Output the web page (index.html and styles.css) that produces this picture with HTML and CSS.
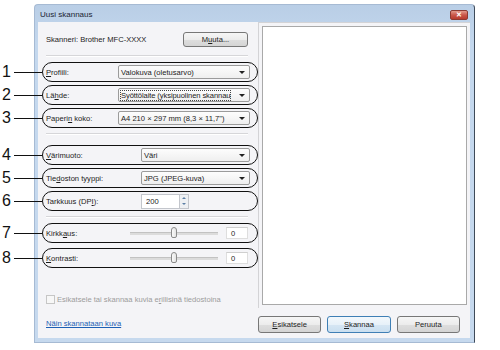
FILE: index.html
```html
<!DOCTYPE html>
<html lang="fi">
<head>
  <meta charset="UTF-8" />
  <meta name="viewport" content="width=device-width, initial-scale=1.0"/>
  <title>Uusi skannaus</title>
  <link rel="stylesheet" href="styles.css">
</head>
<body>
  <div class="page">
    <div class="window">
      <!-- Title bar -->
      <div class="titlebar">
        <span class="title">Uusi skannaus</span>
        <span class="close-btn">✕</span>
      </div>

      <div class="client">
        <!-- Settings column -->
        <div class="settings">
          <div class="scanner-row">
            <span>Skanneri: Brother MFC-XXXX</span>
            <span class="btn btn-change">M<u>u</u>uta...</span>
          </div>
          <div class="sep"></div>

          <div class="field callout">
            <span class="num">1</span>
            <span class="label label-a"><u>P</u>rofiili:</span>
            <div class="combo"><span class="combo-text">Valokuva (oletusarvo)</span></div>
          </div>
          <div class="field callout">
            <span class="num">2</span>
            <span class="label label-a">Lä<u>h</u>de:</span>
            <div class="combo"><span class="combo-text focused">Syöttölaite (yksipuolinen skannau</span></div>
          </div>
          <div class="field callout">
            <span class="num">3</span>
            <span class="label label-a">Paperi<u>n</u> koko:</span>
            <div class="combo"><span class="combo-text">A4 210 × 297 mm (8,3 × 11,7")</span></div>
          </div>
          <div class="sep"></div>

          <div class="field callout first-in-group">
            <span class="num">4</span>
            <span class="label label-b"><u>V</u>ärimuoto:</span>
            <div class="combo"><span class="combo-text">Väri</span></div>
          </div>
          <div class="field callout">
            <span class="num">5</span>
            <span class="label label-b">Tie<u>d</u>oston tyyppi:</span>
            <div class="combo"><span class="combo-text">JPG (JPEG-kuva)</span></div>
          </div>
          <div class="field callout">
            <span class="num">6</span>
            <span class="label label-b">Tarkkuus (DP<u>I</u>):</span>
            <div class="spinner">
              <span class="spin-value">200</span>
              <span class="spin-buttons">
                <span class="spin-up"></span>
                <span class="spin-down"></span>
              </span>
            </div>
          </div>
          <div class="sep"></div>

          <div class="field callout">
            <span class="num">7</span>
            <span class="label label-c">Kirkk<u>a</u>us:</span>
            <div class="slider"><span class="thumb"></span></div>
            <span class="value-box">0</span>
          </div>
          <div class="field callout slider-second">
            <span class="num">8</span>
            <span class="label label-c"><u>K</u>ontrasti:</span>
            <div class="slider"><span class="thumb"></span></div>
            <span class="value-box">0</span>
          </div>

          <div class="check-row">
            <span class="checkbox"></span>
            <span>Esikatsele tai skannaa kuvia e<u>r</u>illisinä tiedostoina</span>
          </div>
          <a class="help-link" href="#">Näin skannataan kuva</a>
        </div>

        <!-- Preview column -->
        <div class="preview-col">
          <div class="preview-frame">
            <div class="preview"></div>
          </div>
          <div class="actions">
            <span class="btn"><u>E</u>sikatsele</span>
            <span class="btn btn-default"><u>S</u>kannaa</span>
            <span class="btn">Peruuta</span>
          </div>
        </div>
      </div>
    </div>
  </div>
</body>
</html>
```

FILE: styles.css
```css
body {
  margin: 0;
  background: #fff;
  font-family: "Liberation Sans", Arial, sans-serif;
  font-size: 7.6px;
  color: #1c1c1c;
}
.page {
  padding: 4px 0 0 34px;
}
.window {
  width: 441px;
  height: 339px;
  box-sizing: border-box;
  background: linear-gradient(#b9cee6, #c4d8ee 40px, #c6d9ee);
  border: 1px solid #a6bad3;
  border-right-color: #3e4a59;
  border-radius: 4px 4px 0 0;
  padding: 0 4px 4px 3px;
  display: flex;
  flex-direction: column;
}
.titlebar {
  height: 17px;
  display: flex;
  align-items: center;
  justify-content: space-between;
  padding: 2px 2px 0 2px;
  box-sizing: border-box;
}
.title {
  color: #1a2433;
  font-size: 8px;
}
.close-btn {
  width: 18px;
  height: 10px;
  box-sizing: border-box;
  border: 1px solid #8c3a32;
  border-radius: 2px;
  background: linear-gradient(#e49a8c, #c9574a 50%, #b93a2d);
  color: #fff;
  font-size: 7px;
  line-height: 8px;
  text-align: center;
  font-weight: bold;
}

/* client area */
.client {
  flex: 1;
  display: flex;
  background: #f4f4f7;
}
.settings {
  width: 220px;
  box-sizing: border-box;
  padding: 10px 8px 0 8px;
  display: flex;
  flex-direction: column;
}
.scanner-row {
  height: 15px;
  display: flex;
  align-items: center;
  justify-content: space-between;
}
.btn {
  width: 65px;
  height: 17px;
  box-sizing: border-box;
  border: 1px solid #777;
  border-radius: 3px;
  background: linear-gradient(#f6f6f6, #ececec 50%, #dedede 51%, #d4d4d4);
  display: inline-flex;
  align-items: center;
  justify-content: center;
  color: #1c1c1c;
}
.btn-change {
  height: 15px;
  margin-right: 2px;
}
.btn-default {
  border-color: #3f7fb5;
  background: linear-gradient(#f3f8fc, #e7f1f9 50%, #d6e6f3 51%, #cadff0);
}
.sep {
  height: 1px;
  background: #d6d6d9;
  box-shadow: 0 1px 0 #fff;
  margin-top: 8px;
  margin-right: 2px;
}

/* form rows */
.field {
  position: relative;
  height: 14px;
  margin-top: 9px;
  display: flex;
  align-items: center;
}
.first-in-group {
  margin-top: 14px;
}
.slider-second {
  margin-top: 11px;
}
.label {
  flex: none;
}
.label-a { width: 72px; }
.label-b { width: 95px; }
.label-c { width: 84px; }

/* callouts drawn over the screenshot */
.callout::before {
  content: '';
  position: absolute;
  left: -4px;
  right: -8px;
  top: -3px;
  bottom: -3px;
  border: 1.5px solid #111;
  border-radius: 11px;
}
.num {
  position: absolute;
  left: -44px;
  top: -1px;
  font-size: 16px;
  line-height: 16px;
  color: #111;
}
.num::after {
  content: '';
  position: absolute;
  left: 12px;
  top: 8px;
  width: 28px;
  height: 1px;
  background: #111;
}

.combo {
  flex: 1;
  height: 14px;
  box-sizing: border-box;
  border: 1px solid #9b9b9b;
  border-radius: 2px;
  background: linear-gradient(#fdfdfd, #efefef);
  display: flex;
  align-items: center;
  padding: 0 4px 0 1px;
  min-width: 0;
}
.combo::after {
  content: '';
  flex: none;
  margin-left: auto;
  border-left: 3px solid transparent;
  border-right: 3px solid transparent;
  border-top: 3px solid #222;
}
.combo-text {
  white-space: nowrap;
  overflow: hidden;
  padding: 0 1px;
  margin-right: 4px;
}
.focused {
  outline: 1px dotted #444;
  outline-offset: -1px;
  padding: 1px 1px;
  margin-right: 1px;
  letter-spacing: -0.1px;
}

.spinner {
  display: flex;
  width: 48px;
  height: 15px;
}
.spin-value {
  flex: 1;
  box-sizing: border-box;
  background: #fff;
  border: 1px solid #c3c6cc;
  border-right: none;
  padding-left: 4px;
  display: flex;
  align-items: center;
}
.spin-buttons {
  width: 8px;
  display: flex;
  flex-direction: column;
  border: 1px solid #c3c6cc;
  background: #eef0f3;
}
.spin-up, .spin-down {
  flex: 1;
  display: flex;
  align-items: center;
  justify-content: center;
}
.spin-up::after {
  content: '';
  border-left: 2px solid transparent;
  border-right: 2px solid transparent;
  border-bottom: 2px solid #5c7fa6;
}
.spin-down::after {
  content: '';
  border-left: 2px solid transparent;
  border-right: 2px solid transparent;
  border-top: 2px solid #5c7fa6;
}

.slider {
  position: relative;
  flex: 1;
  height: 2px;
  background: #dcdcdc;
  border-top: 1px solid #c2c2c2;
  margin-right: 8px;
}
.thumb {
  position: absolute;
  left: 50%;
  top: -6px;
  width: 6px;
  height: 11px;
  margin-left: -3px;
  box-sizing: border-box;
  border: 1px solid #8a8a8a;
  border-radius: 3px 3px 2px 2px;
  background: linear-gradient(90deg, #fafafa, #e4e4e4);
}
.value-box {
  width: 22px;
  height: 12px;
  box-sizing: border-box;
  background: #fff;
  border: 1px solid #dedede;
  border-top-color: #cfcfcf;
  padding-left: 4px;
  margin-right: 2px;
  display: flex;
  align-items: center;
}

.check-row {
  margin-top: 29px;
  height: 10px;
  display: flex;
  align-items: center;
  gap: 2px;
  color: #9c9c9c;
}
.checkbox {
  width: 9px;
  height: 9px;
  box-sizing: border-box;
  border: 1px solid #c6c6c6;
  background: #f7f7f7;
}
.help-link {
  margin-top: 15px;
  color: #1d5fb4;
  line-height: 9px;
  align-self: flex-start;
}

/* preview side */
.preview-col {
  width: 212px;
  display: flex;
  flex-direction: column;
  padding-bottom: 5px;
  box-sizing: border-box;
}
.preview-frame {
  flex: 1;
  border: 1px solid #d3d3d6;
  border-right: none;
  border-bottom: none;
  padding: 3px;
}
.preview {
  height: 100%;
  box-sizing: border-box;
  background: #fff;
  border: 1px solid #a9a9a9;
}
.actions {
  margin-top: 8px;
  display: flex;
  justify-content: flex-end;
  gap: 6px;
  padding-right: 10px;
}
```
